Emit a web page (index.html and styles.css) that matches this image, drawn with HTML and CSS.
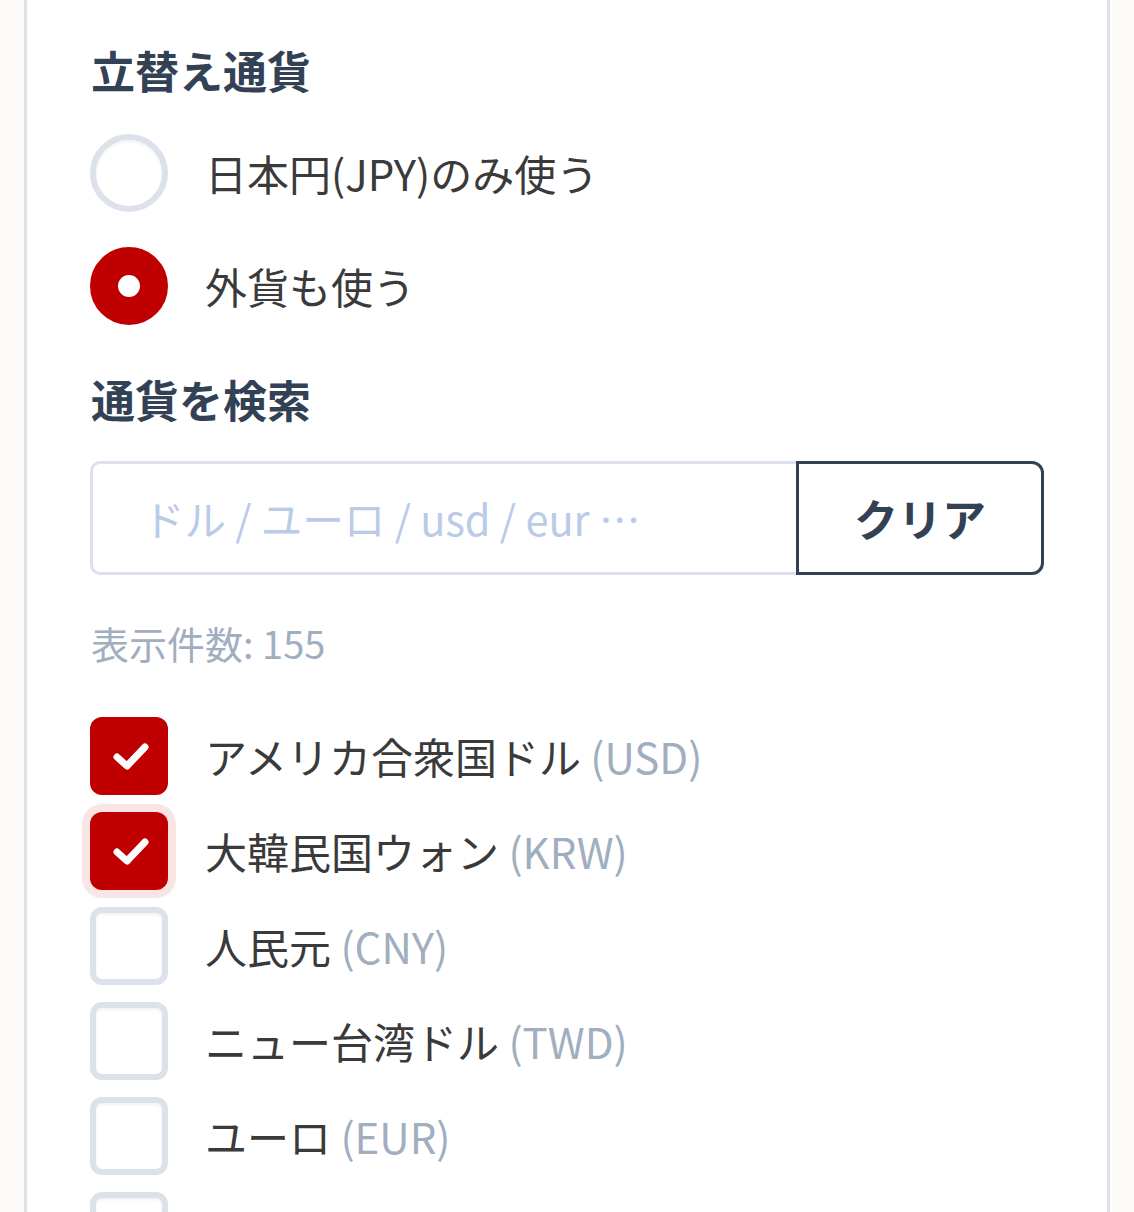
FILE: index.html
```html
<!DOCTYPE html>
<html lang="ja">
<head>
<meta charset="utf-8">
<title>立替え通貨</title>
<link rel="stylesheet" href="styles.css">
</head>
<body>
<div class="card">
  <h2 class="heading">立替え通貨</h2>
  <div class="radios">
    <label class="radio-row">
      <span class="radio"></span>
      <span class="radio-text">日本円(JPY)のみ使う</span>
    </label>
    <label class="radio-row">
      <span class="radio radio-on"></span>
      <span class="radio-text">外貨も使う</span>
    </label>
  </div>
  <h2 class="heading heading-search">通貨を検索</h2>
  <div class="search">
    <input class="search-input" type="text" placeholder="ドル / ユーロ / usd / eur …">
    <button class="search-clear" type="button">クリア</button>
  </div>
  <p class="count">表示件数: 155</p>
  <ul class="list">
    <li class="item">
      <span class="box box-on"><svg viewBox="0 0 78 78" width="78" height="78"><path d="M27 40 L37 49 L55 30" fill="none" stroke="#fff" stroke-width="7" stroke-linecap="round" stroke-linejoin="round"/></svg></span>
      <span class="name">アメリカ合衆国ドル <span class="code">(USD)</span></span>
    </li>
    <li class="item">
      <span class="box box-on box-focus"><svg viewBox="0 0 78 78" width="78" height="78"><path d="M27 40 L37 49 L55 30" fill="none" stroke="#fff" stroke-width="7" stroke-linecap="round" stroke-linejoin="round"/></svg></span>
      <span class="name">大韓民国ウォン <span class="code">(KRW)</span></span>
    </li>
    <li class="item">
      <span class="box"></span>
      <span class="name">人民元 <span class="code">(CNY)</span></span>
    </li>
    <li class="item">
      <span class="box"></span>
      <span class="name">ニュー台湾ドル <span class="code">(TWD)</span></span>
    </li>
    <li class="item">
      <span class="box"></span>
      <span class="name">ユーロ <span class="code">(EUR)</span></span>
    </li>
    <li class="item">
      <span class="box"></span>
    </li>
  </ul>
</div>
</body>
</html>
```
FILE: styles.css
```css
html, body {
  margin: 0;
  padding: 0;
  background: #fdfbf9;
  height: 1212px;
  overflow: hidden;
}
body {
  font-family: "Noto Sans CJK JP", "Noto Sans", sans-serif;
  color: #3a3a3a;
}
.card {
  margin: 0 24px;
  background: #ffffff;
  border-left: 3px solid #dde1ec;
  border-right: 3px solid #dde1ec;
  padding: 38px 63px 0 63px;
  min-height: 1400px;
  box-sizing: border-box;
}
.heading {
  margin: 0;
  font-size: 44px;
  line-height: 64px;
  font-weight: 700;
  color: #334155;
  padding-left: 1px;
}
.radios {
  display: flex;
  flex-direction: column;
  gap: 35px;
  margin-top: 32px;
}
.radio-row {
  display: flex;
  align-items: center;
  gap: 37px;
}
.radio {
  width: 78px;
  height: 78px;
  box-sizing: border-box;
  border-radius: 50%;
  border: 6px solid #dde1ec;
  box-shadow: inset 0 2px 3px rgba(0, 0, 0, 0.05);
  background: #fff;
  flex: none;
}
.radio-on {
  border: 28px solid #c00000;
  box-shadow: none;
}
.radio-text {
  font-size: 42px;
  line-height: 58px;
  color: #3a3a3a;
}
.heading-search {
  margin-top: 42px;
}
.search {
  display: flex;
  margin-top: 30px;
  height: 114px;
  width: 954px;
}
.search-input {
  flex: 1;
  min-width: 0;
  box-sizing: border-box;
  height: 114px;
  border: 3px solid #dde1ec;
  border-right: none;
  border-radius: 10px 0 0 10px;
  padding: 0 0 0 50px;
  font-family: "Noto Sans CJK JP", "Noto Sans", sans-serif;
  font-size: 41.5px;
  color: #3a3a3a;
  background: #fff;
  outline: none;
}
.search-input::placeholder {
  color: #bacbe8;
}
.search-clear {
  width: 248px;
  height: 114px;
  box-sizing: border-box;
  border: 3px solid #334155;
  border-radius: 0 12px 12px 0;
  background: #fff;
  font-family: "Noto Sans CJK JP", "Noto Sans", sans-serif;
  font-size: 44px;
  font-weight: 700;
  color: #334155;
  padding: 0;
}
.count {
  margin: 42px 0 0 0;
  font-size: 38px;
  line-height: 52px;
  color: #a0aec0;
  padding-left: 1px;
}
.list {
  list-style: none;
  margin: 48px 0 0 0;
  padding: 0;
  display: flex;
  flex-direction: column;
  gap: 17px;
}
.item {
  display: flex;
  align-items: center;
  gap: 37px;
  height: 78px;
}
.box {
  width: 78px;
  height: 78px;
  box-sizing: border-box;
  border-radius: 12px;
  border: 6px solid #dde1ec;
  box-shadow: inset 0 2px 3px rgba(0, 0, 0, 0.05);
  background: #fff;
  flex: none;
  display: flex;
}
.box-on {
  border: none;
  background: #c00000;
  box-shadow: none;
}
.box-focus {
  box-shadow: 0 0 0 8px #fae5e5;
}
.name {
  font-size: 42px;
  line-height: 58px;
  color: #3a3a3a;
}
.code {
  color: #a0aec0;
}
```
